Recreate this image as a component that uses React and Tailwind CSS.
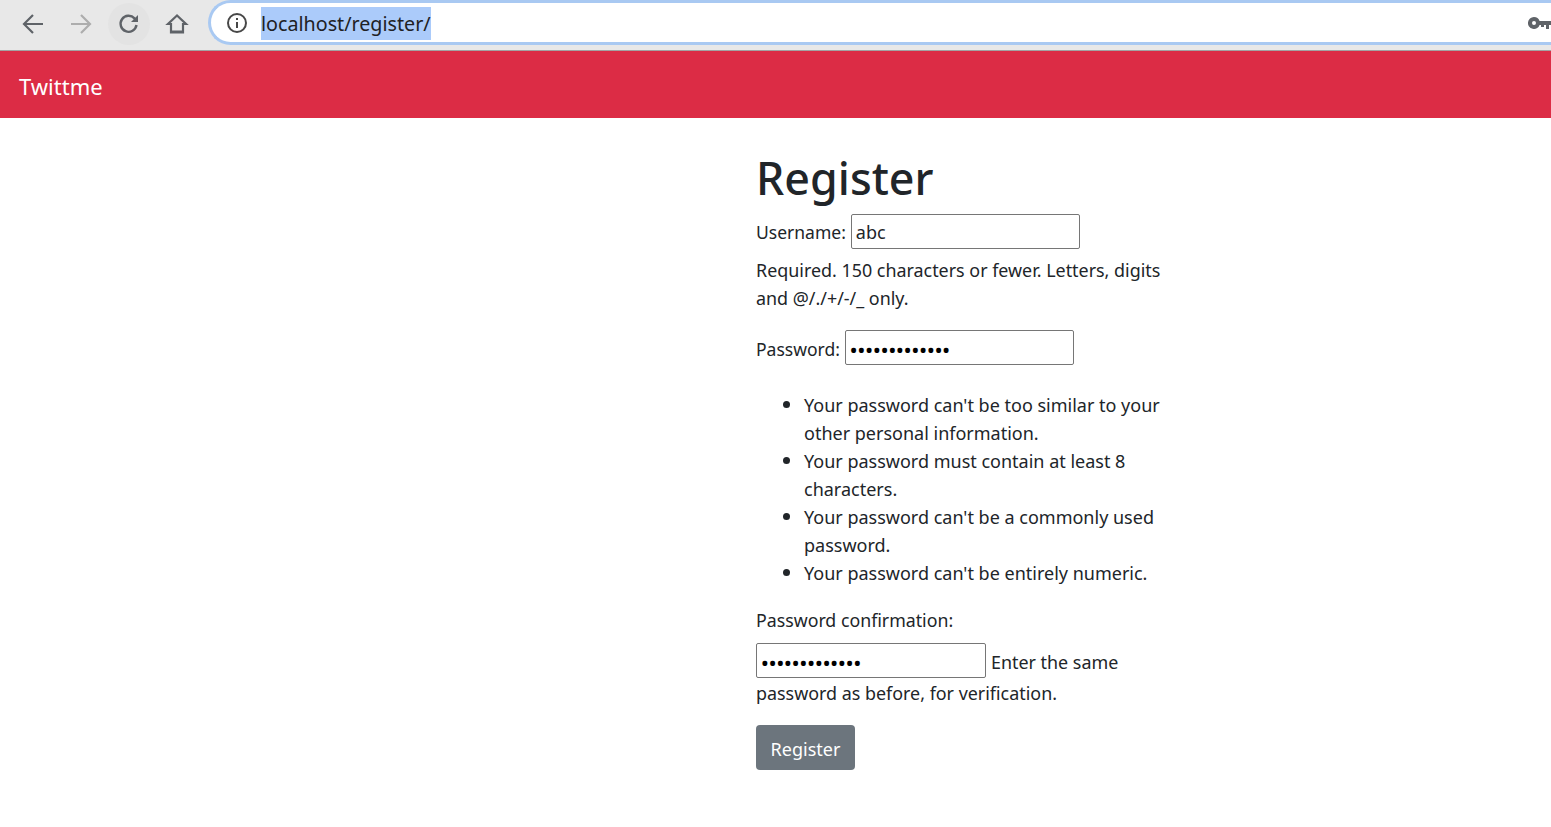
const font = "font-['Noto_Sans','Open_Sans',sans-serif]";

const rules = [
  "Your password can't be too similar to your other personal information.",
  "Your password must contain at least 8 characters.",
  "Your password can't be a commonly used password.",
  "Your password can't be entirely numeric.",
];

function BrowserBar() {
  return (
    <div className="flex h-[51px] items-start border-b border-[#a3a3a3] bg-[#e8e8e8]">
      <div className="flex h-[47px] w-[208px] shrink-0 items-center gap-[6px] pl-[12px] text-[#5f6368]">
        <button className="flex h-[42px] w-[42px] items-center justify-center">
          <svg width="24" height="24" viewBox="0 0 24 24" fill="none" stroke="currentColor" strokeWidth="2.2">
            <path d="M22 12H3M12 3l-9 9 9 9" />
          </svg>
        </button>
        <button className="flex h-[42px] w-[42px] items-center justify-center text-[#adadad]">
          <svg width="24" height="24" viewBox="0 0 24 24" fill="none" stroke="currentColor" strokeWidth="2.2">
            <path d="M2 12h19M12 3l9 9-9 9" />
          </svg>
        </button>
        <button className="flex h-[42px] w-[42px] items-center justify-center rounded-full bg-[#e3e3e3]">
          <svg width="24" height="24" viewBox="0 0 24 24" fill="none" stroke="currentColor" strokeWidth="2.4">
            <path d="M19.5 13a8 8 0 1 1-2-6.6L20 9" />
            <path d="M21 3v7h-7z" fill="currentColor" stroke="none" />
          </svg>
        </button>
        <button className="flex h-[42px] w-[42px] items-center justify-center">
          <svg width="24" height="24" viewBox="0 0 24 24" fill="none" stroke="currentColor" strokeWidth="2.2">
            <path d="M12 3.500 3 12h3v8.500h12V12h3zM6 19.500h12" />
          </svg>
        </button>
      </div>
      <div className="flex h-[45px] min-w-0 flex-1 items-center rounded-l-[23px] border-[3px] border-r-0 border-[#a9c9f2] bg-white pl-[14px]">
        <svg width="24" height="24" viewBox="0 0 24 24" fill="none" stroke="#474747" strokeWidth="2" className="shrink-0">
          <circle cx="12" cy="12" r="9" />
          <path d="M12 11v6M12 7v2" />
        </svg>
        <span className="ml-[12px] mt-[1px] bg-[#abcbfa] text-[19.7px] leading-[33px] text-[#202124] font-['Noto_Sans',sans-serif]">
          localhost/register/
        </span>
        <svg width="23" height="12" viewBox="0 0 23 12" fill="#5f6368" className="ml-auto shrink-0">
          <path fillRule="evenodd" d="M6 0a6 6 0 0 1 5.600 4H23v4h-2v4h-3V8h-2v2h-3V8h-1.400A6 6 0 1 1 6 0zm0 4a2 2 0 1 0 0 4 2 2 0 0 0 0-4z" />
        </svg>
      </div>
    </div>
  );
}

function TextBox({ type = "text", value, width = "w-[229px]" }) {
  const text = type === "password" ? "px-[4px] pt-[5px] text-[20.5px] font-medium text-black" : "px-[4px] text-[18px] text-[#212529]";
  return (
    <input
      type={type}
      value={value}
      readOnly
      className={`h-[35px] rounded-[2px] border border-[#767676] bg-white align-middle outline-none ${width} ${text}`}
    />
  );
}

export default function App() {
  return (
    <div className={`min-h-screen bg-white text-[#212529] ${font}`}>
      <BrowserBar />
      <nav className="flex h-[67px] items-center bg-[#dc2c45] pl-[19px] pt-[4px] text-[22px] text-white">Twittme</nav>
      <main className="pl-[756px] pt-[30px]">
        <div className="w-[411px] text-[18px] leading-[28px]">
          <h1 className="mb-[6px] text-[44.8px] font-medium leading-[60px]">Register</h1>
          <form>
            <div className="mb-[7px] flex h-[35px] items-center gap-[5px]">
              <label className="text-[17.5px]">Username:</label>
              <TextBox value="abc" />
            </div>
            <p className="mb-[18px] text-[17.9px]">Required. 150 characters or fewer. Letters, digits and @/./+/-/_ only.</p>
            <div className="mb-[26px] flex h-[35px] items-center gap-[5px]">
              <label className="pt-[2px] text-[17.5px]">Password:</label>
              <TextBox type="password" value="abcdefghijklm" />
            </div>
            <ul className="mb-[19px] pl-[48px]">
              {rules.map((rule) => (
                <li
                  key={rule}
                  className="relative before:absolute before:left-[-21px] before:top-[10px] before:h-[7px] before:w-[7px] before:rounded-full before:bg-[#212529]"
                >
                  {rule}
                </li>
              ))}
            </ul>
            <label className="block text-[17.75px]">Password confirmation:</label>
            <div className="mt-[9px] flex h-[35px] items-center gap-[5px]">
              <TextBox type="password" value="abcdefghijklm" width="w-[230px]" />
              <span className="pt-[2px] text-[17.9px]">Enter the same</span>
            </div>
            <p className="mb-[18px] mt-[1px] text-[17.9px]">password as before, for verification.</p>
            <button type="button" className="h-[45px] w-[99px] rounded-[4px] bg-[#6c757d] pt-[2px] text-white">
              Register
            </button>
          </form>
        </div>
      </main>
    </div>
  );
}
